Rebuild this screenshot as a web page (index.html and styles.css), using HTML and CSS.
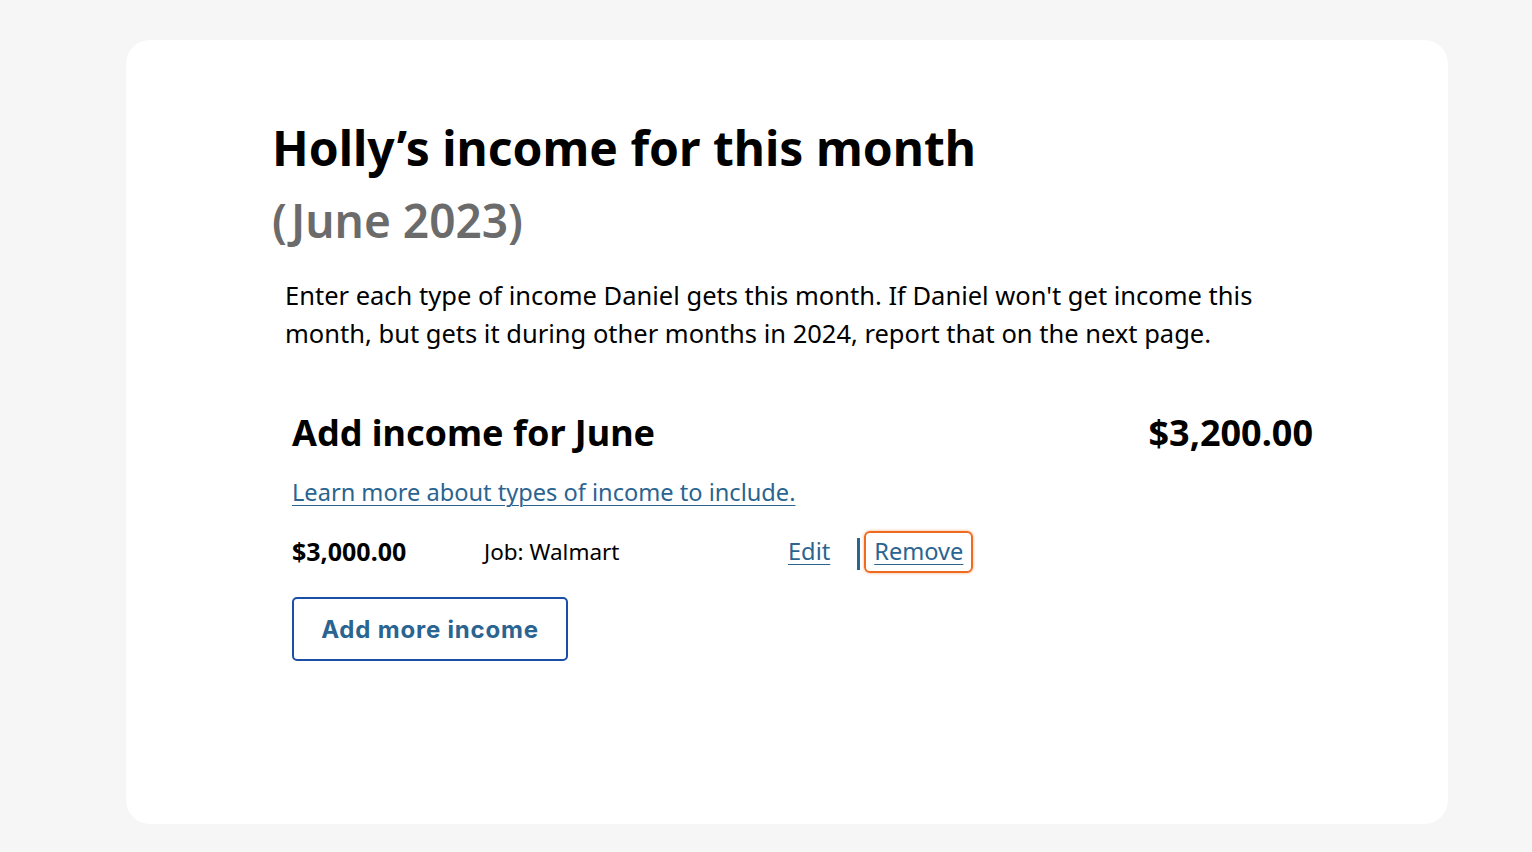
FILE: index.html
```html
<!DOCTYPE html>
<html lang="en">
<head>
<meta charset="utf-8">
<title>Income</title>
<link rel="stylesheet" href="styles.css">
</head>
<body>
<main class="card">
  <h1 class="title">Holly’s income for this month<span class="sub">(June 2023)</span></h1>
  <p class="intro">Enter each type of income Daniel gets this month. If Daniel won't get income this month, but gets it during other months in 2024, report that on the next page.</p>
  <section class="income">
    <div class="income-head">
      <h2 class="income-title">Add income for June</h2>
      <span class="income-total">$3,200.00</span>
    </div>
    <a class="link learn" href="#">Learn more about types of income to include.</a>
    <div class="row">
      <span class="amount">$3,000.00</span>
      <span class="source">Job: Walmart</span>
      <a class="link edit" href="#">Edit</a>
      <span class="sep"></span>
      <a class="link remove" href="#">Remove</a>
    </div>
    <button class="btn">Add more income</button>
  </section>
</main>
</body>
</html>
```
FILE: styles.css
```css
* { box-sizing: border-box; }
html, body { margin: 0; padding: 0; }
body {
  background: #f6f6f6;
  font-family: "Noto Sans", "Open Sans", sans-serif;
  color: #000;
  padding: 40px 84px 28px 126px;
}
.card {
  background: #fff;
  border-radius: 24px;
  height: 784px;
  padding: 72px 135px 0 146px;
}
.title {
  margin: 0;
  font-size: 48px;
  font-weight: 700;
  line-height: 72px;
  letter-spacing: 0;
}
.sub {
  display: block;
  color: #6b6b6b;
  font-size: 46px;
  font-weight: 600;
  line-height: 72px;
}
.intro {
  margin: 20px 0 0 13px;
  font-size: 25.5px;
  line-height: 38px;
  max-width: 1010px;
}
.income { margin: 56px 0 0 20px; }
.income-head {
  display: flex;
  justify-content: space-between;
  align-items: baseline;
}
.income-title {
  margin: 0;
  font-size: 36px;
  font-weight: 700;
  line-height: 50px;
}
.income-total {
  font-size: 36px;
  font-weight: 700;
}
.link {
  color: #2a6490;
  text-decoration: underline;
  text-underline-offset: 4px;
  text-decoration-thickness: 1px;
}
.learn {
  display: inline-block;
  margin-top: 17px;
  font-size: 23.6px;
  line-height: 34px;
}
.row {
  display: flex;
  align-items: center;
  margin-top: 20px;
  height: 44px;
  font-size: 22.5px;
}
.amount { font-weight: 700; width: 192px; font-size: 25px; }
.source { width: 304px; }
.edit { font-size: 23.6px; }
.sep {
  display: inline-block;
  width: 3px;
  height: 32px;
  background: #2a6490;
  margin: 6px 4px 0 27px;
}
.remove {
  font-size: 23.6px;
  margin-top: 2px;
  padding: 4px 8px 6px 8px;
  border: 2px solid #ef6b1e;
  border-radius: 6px;
  box-shadow: 0 0 3px rgba(239,107,30,0.6);
  line-height: 28px;
}
.btn {
  display: block;
  margin-top: 24px;
  width: 276px;
  height: 64px;
  background: #fff;
  border: 2px solid #1a4fa5;
  border-radius: 5px;
  color: #2a6490;
  font-family: "Inter", "Lato", sans-serif;
  font-size: 24px;
  letter-spacing: 0.8px;
  font-weight: 700;
  cursor: pointer;
}
```
